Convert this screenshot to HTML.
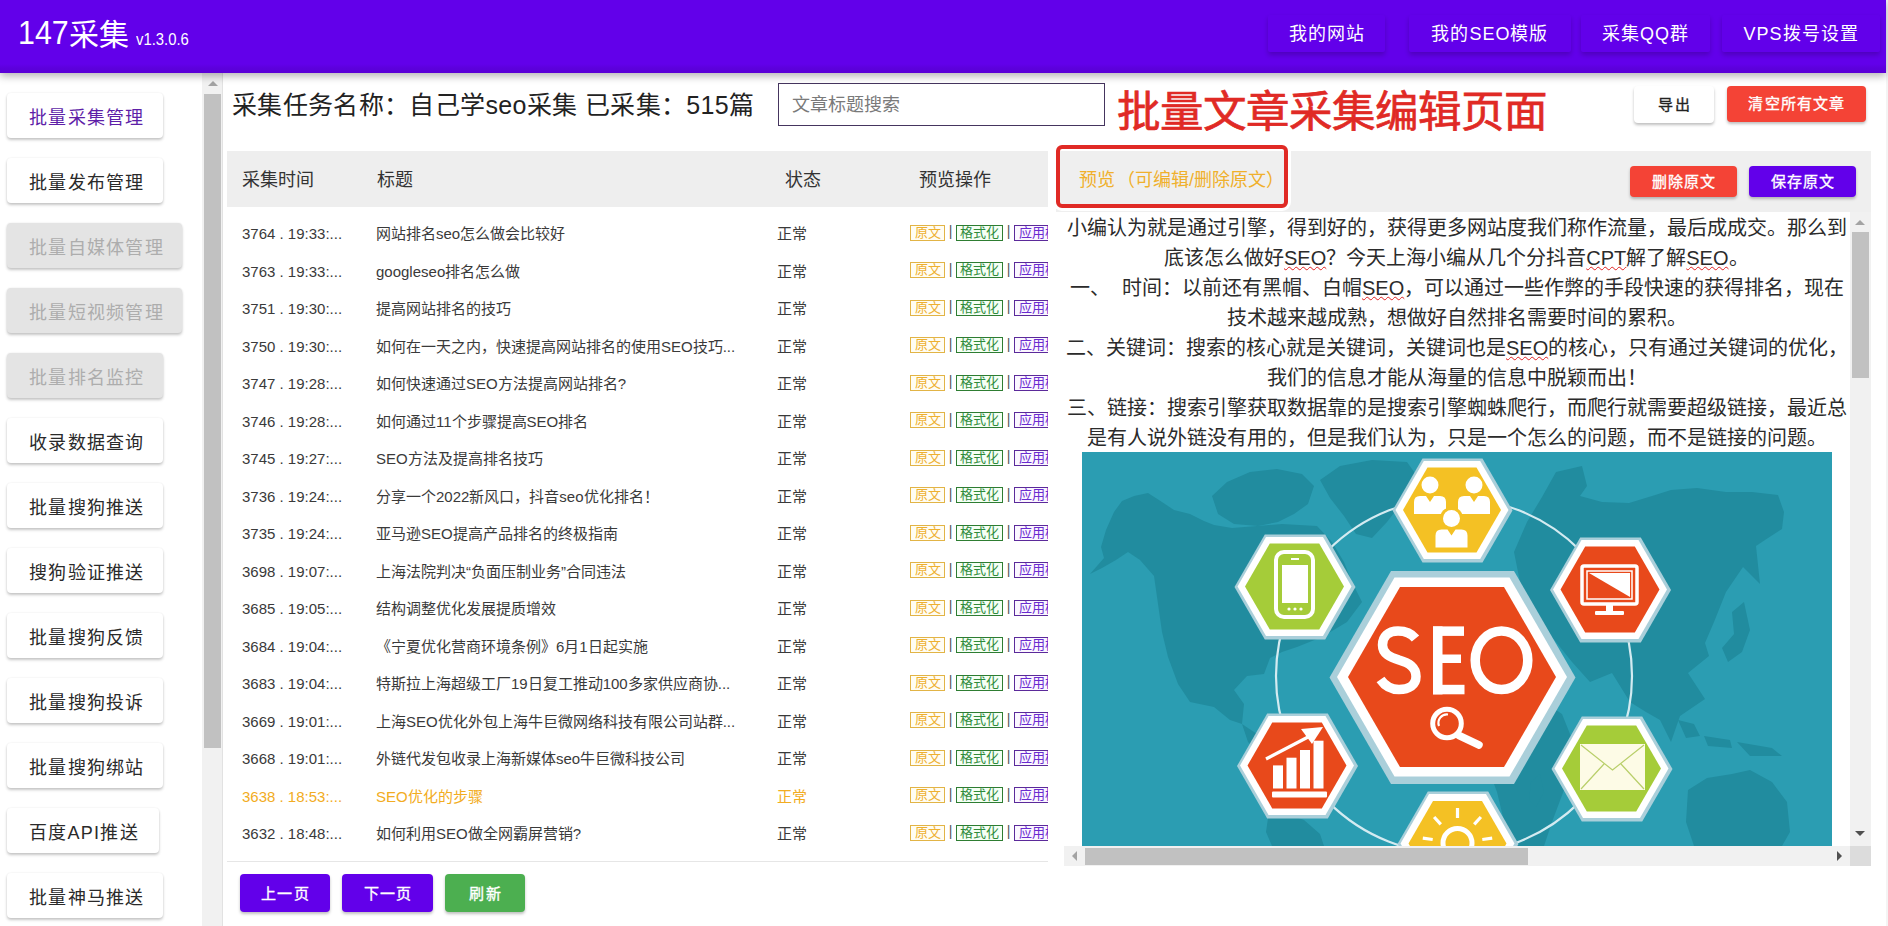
<!DOCTYPE html>
<html lang="zh-CN"><head><meta charset="utf-8">
<style>
*{margin:0;padding:0;box-sizing:border-box}
html,body{width:1888px;height:926px;overflow:hidden;background:#fff;font-family:"Liberation Sans",sans-serif;color:#222}
.abs{position:absolute}
#hdr{position:absolute;left:0;top:0;width:1886px;height:73px;background:linear-gradient(#6200ea 0,#6200ea 64px,#5c00dc 68px,#5a00d6 73px);box-shadow:0 3px 8px rgba(0,0,0,.3);z-index:5}
#hdr .logo{position:absolute;left:18px;top:10px;color:#fff;font-size:30px;white-space:nowrap}
#hdr .n147{display:inline-block;font-size:33px;transform:scaleX(0.92);transform-origin:0 0;margin-right:-4px;position:relative;top:-1px}
#hdr .ver{position:absolute;left:135.5px;top:29.5px;font-size:16.5px;color:#fff;white-space:nowrap;transform:scaleX(0.9);transform-origin:0 0}
.nb{position:absolute;top:15px;height:37px;background:#6200ea;color:#fff;font-size:18px;letter-spacing:1px;text-align:center;line-height:39px;border-radius:2px;box-shadow:0 3px 5px rgba(0,0,0,.2)}
#rstrip{position:absolute;left:1886px;top:0;width:2px;height:926px;background:#f4f4f4}
.sb{position:absolute;left:7px;height:45px;background:#fff;border-radius:4px;box-shadow:0 2px 3px rgba(0,0,0,.22),0 0 2px rgba(0,0,0,.08);font-size:18px;letter-spacing:1.25px;color:#2a2a2a;line-height:50px;padding-left:22px;white-space:nowrap}
.sb.dis{background:#e4e4e4;color:#adadad}
.sb.act{color:#5e1fa8}

#title{position:absolute;left:232px;top:86.5px;font-size:25px;letter-spacing:0.35px;color:#222;white-space:nowrap;line-height:36px}
#search{position:absolute;left:778px;top:83px;width:327px;height:43px;border:1px solid #45355e;font-size:18px;color:#7a7a7a;line-height:43px;padding-left:13px}
#bigred{position:absolute;left:1117px;top:84px;font-size:43.5px;color:#e02a25;white-space:nowrap;line-height:56px;-webkit-text-stroke:0.7px #e02a25}
.btn{position:absolute;color:#fff;text-align:center;border-radius:4px;box-shadow:0 2px 3px rgba(0,0,0,.25);white-space:nowrap;letter-spacing:1.2px;text-indent:1.2px;-webkit-text-stroke:0.35px currentColor}
#thead{position:absolute;left:227px;top:151px;width:821px;height:56px;background:#eeeeee;font-size:18px;color:#333;line-height:58px}
#thead span{position:absolute;top:0}
#tbody{position:absolute;left:227px;top:208px;width:821px;height:653px;overflow:hidden}
.row{position:absolute;left:0;width:821px;height:37.5px;line-height:37.5px;font-size:15px;color:#3a3a3a;white-space:nowrap}
.row span{position:absolute;top:0}
.row .c1{left:15px}
.row .c2{left:149px}
.row .c3{left:550px}
.row .tags{left:683px;font-size:0}
.row.hl{color:#f2ac22}
.tg{display:inline-block;font-style:normal;font-size:13px;height:16px;line-height:14px;border:1px solid;padding:0 3.5px;vertical-align:middle;margin-top:-1px}
.tg.y{color:#eeb030;border-color:#e2b446;background:#fffdf3}
.tg.g{color:#2e8b3a;border-color:#2e7d32;background:#f5fff5;padding:0 3px}
.tg.p{color:#6a2bd0;border-color:#5b2a9a;background:#fbf7ff}
.row b{display:inline-block;font-weight:normal;font-size:14px;color:#555;width:11px;text-align:center;vertical-align:middle;margin-top:-3px}
#tline{position:absolute;left:227px;top:861px;width:821px;height:1px;background:#e6e6e6}

#pv{position:absolute;left:1056px;top:151px;width:815px;height:716px;background:#fff}
#pvh{position:absolute;left:1056px;top:151px;width:815px;height:61px;background:#efefef}
#pvt{position:absolute;left:1079px;top:166px;font-size:18px;color:#f0b02c;white-space:nowrap;line-height:28px}
#redbox{position:absolute;left:1056px;top:145px;width:232px;height:63px;border:4px solid #e02a25;border-radius:6px;box-shadow:0 0 0 3px #fff}
#txt{position:absolute;left:1056px;top:213px;width:794px;height:633px;overflow:hidden;background:#fff}
.ln{position:absolute;white-space:nowrap;font-size:20px;line-height:30px;color:#2b2b2b}
.sp{text-decoration:underline wavy #e02020;text-decoration-thickness:1px;text-underline-offset:1px}
#vsb{position:absolute;left:1850px;top:212px;width:21px;height:634px;background:#f1f1f1}
#hsb{position:absolute;left:1064px;top:846px;width:786px;height:20px;background:#f1f1f1}
</style></head><body>
<div id="hdr">
  <div class="logo"><span class="n147">147</span>采集</div><div class="ver">v1.3.0.6</div>
  <div class="nb" style="left:1268px;width:117px">我的网站</div>
  <div class="nb" style="left:1409px;width:162px">我的SEO模版</div>
  <div class="nb" style="left:1581px;width:129px">采集QQ群</div>
  <div class="nb" style="left:1722px;width:158px">VPS拨号设置</div>
</div>
<div id="rstrip"></div>

<!-- sidebar -->
<div class="sb act" style="top:93px;width:156px">批量采集管理</div>
<div class="sb" style="top:158px;width:156px">批量发布管理</div>
<div class="sb dis" style="top:223px;width:175px">批量自媒体管理</div>
<div class="sb dis" style="top:288px;width:175px">批量短视频管理</div>
<div class="sb dis" style="top:353px;width:156px">批量排名监控</div>
<div class="sb" style="top:418px;width:156px">收录数据查询</div>
<div class="sb" style="top:483px;width:156px">批量搜狗推送</div>
<div class="sb" style="top:548px;width:156px">搜狗验证推送</div>
<div class="sb" style="top:613px;width:156px">批量搜狗反馈</div>
<div class="sb" style="top:678px;width:156px">批量搜狗投诉</div>
<div class="sb" style="top:743px;width:156px">批量搜狗绑站</div>
<div class="sb" style="top:808px;width:152px">百度API推送</div>
<div class="sb" style="top:873px;width:156px">批量神马推送</div>

<!-- sidebar scrollbar -->
<div class="abs" style="left:202px;top:73px;width:21px;height:853px;background:#f1f1f1;border-right:1px solid #e2e2e2"></div>
<div class="abs" style="left:204px;top:94px;width:17px;height:654px;background:#c1c1c1"></div>
<div class="abs" style="left:208px;top:81px;width:0;height:0;border-left:5px solid transparent;border-right:5px solid transparent;border-bottom:5px solid #a3a3a3"></div>


<div id="title">采集任务名称：自己学seo采集 已采集：515篇</div>
<div id="search">文章标题搜索</div>
<div id="bigred">批量文章采集编辑页面</div>
<div class="btn" style="left:1634px;top:86px;width:80px;height:37px;line-height:37px;background:#fff;color:#222;font-size:15px">导出</div>
<div class="btn" style="left:1727px;top:86px;width:139px;height:36px;line-height:36px;background:#f44336;font-size:15px">清空所有文章</div>

<div id="thead"><span style="left:15px">采集时间</span><span style="left:150px">标题</span><span style="left:558px">状态</span><span style="left:692px">预览操作</span></div>
<div id="tbody">
<div class="row" style="top:7.25px"><span class="c1">3764 . 19:33:...</span><span class="c2">网站排名seo怎么做会比较好</span><span class="c3">正常</span><span class="tags"><i class="tg y">原文</i><b>|</b><i class="tg g">格式化</i><b>|</b><i class="tg p">应用模板</i></span></div>
<div class="row" style="top:44.75px"><span class="c1">3763 . 19:33:...</span><span class="c2">googleseo排名怎么做</span><span class="c3">正常</span><span class="tags"><i class="tg y">原文</i><b>|</b><i class="tg g">格式化</i><b>|</b><i class="tg p">应用模板</i></span></div>
<div class="row" style="top:82.25px"><span class="c1">3751 . 19:30:...</span><span class="c2">提高网站排名的技巧</span><span class="c3">正常</span><span class="tags"><i class="tg y">原文</i><b>|</b><i class="tg g">格式化</i><b>|</b><i class="tg p">应用模板</i></span></div>
<div class="row" style="top:119.75px"><span class="c1">3750 . 19:30:...</span><span class="c2">如何在一天之内，快速提高网站排名的使用SEO技巧...</span><span class="c3">正常</span><span class="tags"><i class="tg y">原文</i><b>|</b><i class="tg g">格式化</i><b>|</b><i class="tg p">应用模板</i></span></div>
<div class="row" style="top:157.25px"><span class="c1">3747 . 19:28:...</span><span class="c2">如何快速通过SEO方法提高网站排名?</span><span class="c3">正常</span><span class="tags"><i class="tg y">原文</i><b>|</b><i class="tg g">格式化</i><b>|</b><i class="tg p">应用模板</i></span></div>
<div class="row" style="top:194.75px"><span class="c1">3746 . 19:28:...</span><span class="c2">如何通过11个步骤提高SEO排名</span><span class="c3">正常</span><span class="tags"><i class="tg y">原文</i><b>|</b><i class="tg g">格式化</i><b>|</b><i class="tg p">应用模板</i></span></div>
<div class="row" style="top:232.25px"><span class="c1">3745 . 19:27:...</span><span class="c2">SEO方法及提高排名技巧</span><span class="c3">正常</span><span class="tags"><i class="tg y">原文</i><b>|</b><i class="tg g">格式化</i><b>|</b><i class="tg p">应用模板</i></span></div>
<div class="row" style="top:269.75px"><span class="c1">3736 . 19:24:...</span><span class="c2">分享一个2022新风口，抖音seo优化排名！</span><span class="c3">正常</span><span class="tags"><i class="tg y">原文</i><b>|</b><i class="tg g">格式化</i><b>|</b><i class="tg p">应用模板</i></span></div>
<div class="row" style="top:307.25px"><span class="c1">3735 . 19:24:...</span><span class="c2">亚马逊SEO提高产品排名的终极指南</span><span class="c3">正常</span><span class="tags"><i class="tg y">原文</i><b>|</b><i class="tg g">格式化</i><b>|</b><i class="tg p">应用模板</i></span></div>
<div class="row" style="top:344.75px"><span class="c1">3698 . 19:07:...</span><span class="c2">上海法院判决“负面压制业务”合同违法</span><span class="c3">正常</span><span class="tags"><i class="tg y">原文</i><b>|</b><i class="tg g">格式化</i><b>|</b><i class="tg p">应用模板</i></span></div>
<div class="row" style="top:382.25px"><span class="c1">3685 . 19:05:...</span><span class="c2">结构调整优化发展提质增效</span><span class="c3">正常</span><span class="tags"><i class="tg y">原文</i><b>|</b><i class="tg g">格式化</i><b>|</b><i class="tg p">应用模板</i></span></div>
<div class="row" style="top:419.75px"><span class="c1">3684 . 19:04:...</span><span class="c2">《宁夏优化营商环境条例》6月1日起实施</span><span class="c3">正常</span><span class="tags"><i class="tg y">原文</i><b>|</b><i class="tg g">格式化</i><b>|</b><i class="tg p">应用模板</i></span></div>
<div class="row" style="top:457.25px"><span class="c1">3683 . 19:04:...</span><span class="c2">特斯拉上海超级工厂19日复工推动100多家供应商协...</span><span class="c3">正常</span><span class="tags"><i class="tg y">原文</i><b>|</b><i class="tg g">格式化</i><b>|</b><i class="tg p">应用模板</i></span></div>
<div class="row" style="top:494.75px"><span class="c1">3669 . 19:01:...</span><span class="c2">上海SEO优化外包上海牛巨微网络科技有限公司站群...</span><span class="c3">正常</span><span class="tags"><i class="tg y">原文</i><b>|</b><i class="tg g">格式化</i><b>|</b><i class="tg p">应用模板</i></span></div>
<div class="row" style="top:532.25px"><span class="c1">3668 . 19:01:...</span><span class="c2">外链代发包收录上海新媒体seo牛巨微科技公司</span><span class="c3">正常</span><span class="tags"><i class="tg y">原文</i><b>|</b><i class="tg g">格式化</i><b>|</b><i class="tg p">应用模板</i></span></div>
<div class="row hl" style="top:569.75px"><span class="c1">3638 . 18:53:...</span><span class="c2">SEO优化的步骤</span><span class="c3">正常</span><span class="tags"><i class="tg y">原文</i><b>|</b><i class="tg g">格式化</i><b>|</b><i class="tg p">应用模板</i></span></div>
<div class="row" style="top:607.25px"><span class="c1">3632 . 18:48:...</span><span class="c2">如何利用SEO做全网霸屏营销?</span><span class="c3">正常</span><span class="tags"><i class="tg y">原文</i><b>|</b><i class="tg g">格式化</i><b>|</b><i class="tg p">应用模板</i></span></div>
</div>
<div id="tline"></div>
<div class="btn" style="left:240px;top:874px;width:90px;height:38px;line-height:40px;background:#6200ea;font-size:15px">上一页</div>
<div class="btn" style="left:342px;top:874px;width:91px;height:38px;line-height:40px;background:#6200ea;font-size:15px">下一页</div>
<div class="btn" style="left:445px;top:874px;width:80px;height:38px;line-height:40px;background:#4caf50;font-size:15px">刷新</div>

<div id="pvh"></div>
<div id="pvt">预览<span style="margin-left:2px"></span>（可编辑/删除原文）</div>
<div class="btn" style="left:1630px;top:166px;width:107px;height:31px;line-height:31px;background:#f44336;font-size:15px">删除原文</div>
<div class="btn" style="left:1749px;top:166px;width:107px;height:31px;line-height:31px;background:#6200ea;font-size:15px">保存原文</div>
<div id="txt">
<div class="ln" style="left:11px;top:0px">小编认为就是通过引擎，得到好的，获得更多网站度我们称作流量，最后成成交。那么到</div>
<div class="ln" style="left:108px;top:30px">底该怎么做好<span class="sp">SEO</span>？今天上海小编从几个分抖音<span class="sp">CPT</span>解了解<span class="sp">SEO</span>。</div>
<div class="ln" style="left:14px;top:60px">一、<span style="margin-left:2px"></span>　时间：以前还有黑帽、白帽<span class="sp">SEO</span>，可以通过一些作弊的手段快速的获得排名，现在</div>
<div class="ln" style="left:171px;top:90px">技术越来越成熟，想做好自然排名需要时间的累积。</div>
<div class="ln" style="left:10px;top:120px">二、关键词：搜索的核心就是关键词，关键词也是<span class="sp">SEO</span>的核心，只有通过关键词的优化，</div>
<div class="ln" style="left:211px;top:150px">我们的信息才能从海量的信息中脱颖而出！</div>
<div class="ln" style="left:11px;top:180px">三、链接：搜索引擎获取数据靠的是搜索引擎蜘蛛爬行，而爬行就需要超级链接，最近总</div>
<div class="ln" style="left:31px;top:210px">是有人说外链没有用的，但是我们认为，只是一个怎么的问题，而不是链接的问题。</div>
<div id="img" style="position:absolute;left:26px;top:239px;width:750px;height:394px;background:#2b9bb0"><svg width="750" height="394" viewBox="0 0 750 394" style="display:block"><rect width="750" height="394" fill="#2b9db2"/><path d="M19,95 L24,78 L32,60 L40,49 L52,44 L66,41 L80,50 L92,58 L108,62 L122,69 L132,73 L150,76 L175,74 L200,72 L235,74 L250,90 L262,110 L270,130 L280,150 L265,170 L240,185 L215,195 L200,200 L188,206 L182,222 L165,224 L152,238 L162,252 L160,272 L148,268 L132,255 L108,250 L96,232 L86,205 L80,180 L76,152 L72,124 L58,108 L46,100 L34,108 L20,116 L8,122 L22,106 Z" fill="#218c9f"/><path d="M130,44 L145,30 L168,20 L195,17 L220,22 L232,34 L226,52 L212,62 L196,70 L176,74 L152,72 L136,62 Z" fill="#218c9f"/><path d="M238,28 L258,14 L290,8 L325,10 L335,24 L322,48 L305,70 L290,86 L274,82 L262,64 L248,46 Z" fill="#218c9f"/><path d="M160,272 L178,284 L196,300 L208,314 L198,318 L180,304 L166,290 Z" fill="#218c9f"/><path d="M186,366 L205,362 L222,368 L238,382 L242,394 L190,394 L184,380 Z" fill="#218c9f"/><path d="M474,20 L500,14 L505,34 L498,44 L520,50 L547,51 L570,44 L589,38 L615,36 L644,40 L670,40 L696,43 L702,60 L700,77 L686,86 L674,94 L678,132 L661,115 L644,140 L632,170 L623,191 L627,204 L606,221 L623,247 L598,264 L589,290 L578,268 L564,260 L548,250 L530,221 L508,230 L490,210 L474,190 L455,170 L440,140 L432,100 L445,70 L460,45 Z" fill="#218c9f"/><path d="M650,160 L662,150 L668,178 L660,200 L646,210 L640,196 L652,182 Z" fill="#218c9f"/><path d="M596,268 L612,272 L618,284 L604,286 Z M622,284 L648,288 L650,296 L626,294 Z M655,290 L690,296 L700,304 L668,304 Z" fill="#218c9f"/><path d="M606,338 L625,326 L650,322 L668,318 L690,330 L705,350 L708,380 L700,394 L612,394 L604,370 Z" fill="#218c9f"/><path d="M420,250 L455,245 L480,262 L492,292 L485,330 L470,370 L462,394 L428,394 L415,340 L400,300 L395,270 Z" fill="#218c9f"/><path d="M449,330 L458,322 L462,340 L454,355 L447,348 Z" fill="#218c9f"/><circle cx="372" cy="224" r="178" fill="none" stroke="#d4ebf1" stroke-width="2.2"/><polygon points="493.5,225.5 432.0,332.0 309.0,332.0 247.5,225.5 309.0,119.0 432.0,119.0" fill="#aacfda"/><polygon points="485.0,225.0 427.5,324.6 312.5,324.6 255.0,225.0 312.5,125.4 427.5,125.4" fill="#fff"/><polygon points="474.0,225.0 422.0,315.1 318.0,315.1 266.0,225.0 318.0,134.9 422.0,134.9" fill="#e8491b"/><polygon points="430.5,58.5 400.5,110.5 340.5,110.5 310.5,58.5 340.5,6.5 400.5,6.5" fill="#aacfda"/><polygon points="426.5,58.0 398.2,106.9 341.8,106.9 313.5,58.0 341.8,9.1 398.2,9.1" fill="#fff"/><polygon points="419.0,58.0 394.5,100.4 345.5,100.4 321.0,58.0 345.5,15.6 394.5,15.6" fill="#f4c124"/><polygon points="273.5,135.0 243.2,187.4 182.8,187.4 152.5,135.0 182.8,82.6 243.2,82.6" fill="#aacfda"/><polygon points="269.5,134.5 241.0,183.9 184.0,183.9 155.5,134.5 184.0,85.1 241.0,85.1" fill="#fff"/><polygon points="262.0,134.5 237.2,177.4 187.8,177.4 163.0,134.5 187.8,91.6 237.2,91.6" fill="#a5cc39"/><polygon points="589.0,138.0 558.8,190.4 498.2,190.4 468.0,138.0 498.2,85.6 558.8,85.6" fill="#aacfda"/><polygon points="585.0,137.5 556.5,186.9 499.5,186.9 471.0,137.5 499.5,88.1 556.5,88.1" fill="#fff"/><polygon points="577.5,137.5 552.8,180.4 503.2,180.4 478.5,137.5 503.2,94.6 552.8,94.6" fill="#e8491b"/><polygon points="276.0,314.0 245.8,366.4 185.2,366.4 155.0,314.0 185.2,261.6 245.8,261.6" fill="#aacfda"/><polygon points="272.0,313.5 243.5,362.9 186.5,362.9 158.0,313.5 186.5,264.1 243.5,264.1" fill="#fff"/><polygon points="264.5,313.5 239.8,356.4 190.2,356.4 165.5,313.5 190.2,270.6 239.8,270.6" fill="#e8491b"/><polygon points="590.5,317.0 560.2,369.4 499.8,369.4 469.5,317.0 499.8,264.6 560.2,264.6" fill="#aacfda"/><polygon points="586.5,316.5 558.0,365.9 501.0,365.9 472.5,316.5 501.0,267.1 558.0,267.1" fill="#fff"/><polygon points="579.0,316.5 554.2,359.4 504.8,359.4 480.0,316.5 504.8,273.6 554.2,273.6" fill="#a5cc39"/><polygon points="436.5,392.0 406.2,444.4 345.8,444.4 315.5,392.0 345.8,339.6 406.2,339.6" fill="#aacfda"/><polygon points="432.5,391.5 404.0,440.9 347.0,440.9 318.5,391.5 347.0,342.1 404.0,342.1" fill="#fff"/><polygon points="424.5,391.5 400.0,433.9 351.0,433.9 326.5,391.5 351.0,349.1 400.0,349.1" fill="#f4c124"/><path d="M333.5,186.5 C329,181 322,179 316,179 C306,179 300.5,185 300.5,193 C300.5,202 308,205 317,208 C327,211 334,215 334,224.5 C334,233 327,237.5 317,237.5 C309,237.5 303,234 298.5,227.5" fill="none" stroke="#fff" stroke-width="9.5" stroke-linecap="butt"/><rect x="351" y="174.4" width="9.5" height="68" fill="#fff"/><rect x="351" y="174.4" width="31" height="9.5" fill="#fff"/><rect x="351" y="202.5" width="28" height="8.5" fill="#fff"/><rect x="351" y="232.8" width="31.5" height="9.5" fill="#fff"/><ellipse cx="419.5" cy="208.3" rx="26.3" ry="29.2" fill="none" stroke="#fff" stroke-width="9.5"/><circle cx="365" cy="271.5" r="14.3" fill="none" stroke="#fff" stroke-width="5"/><path d="M357,274 A8.5,8.5 0 0 1 366,262.5" fill="none" stroke="#fff" stroke-width="2.2"/><line x1="377" y1="283.5" x2="397" y2="293" stroke="#fff" stroke-width="7.5" stroke-linecap="round"/><circle cx="348" cy="33" r="8.5" fill="#fff"/><path d="M332,62 L332,50 Q332,44 338,44 L344,44 L348,50 L352,44 L358,44 Q364,44 364,50 L364,62 Z" fill="#fff"/><circle cx="392" cy="33" r="8.5" fill="#fff"/><path d="M376,62 L376,50 Q376,44 382,44 L388,44 L392,50 L396,44 L402,44 Q408,44 408,50 L408,62 Z" fill="#fff"/><circle cx="369.5" cy="66.5" r="11.5" fill="#f4c124"/><circle cx="369.5" cy="66.5" r="8.5" fill="#fff"/><path d="M353.5,95.5 L353.5,83.5 Q353.5,77.5 359.5,77.5 L365.5,77.5 L369.5,83.5 L373.5,77.5 L379.5,77.5 Q385.5,77.5 385.5,83.5 L385.5,95.5 Z" fill="#fff"/><rect x="194" y="100" width="37" height="65" rx="8" fill="none" stroke="#fff" stroke-width="4"/><rect x="200" y="113" width="26" height="38" fill="#fff"/><rect x="209" y="106" width="8" height="2" fill="#fff"/><circle cx="207" cy="157" r="1.6" fill="#fff"/><circle cx="213" cy="157" r="1.6" fill="#fff"/><circle cx="219" cy="157" r="1.6" fill="#fff"/><rect x="500" y="114" width="55" height="38" rx="2" fill="none" stroke="#fff" stroke-width="3.5"/><rect x="505" y="119" width="45" height="28" fill="none" stroke="#fff" stroke-width="1.5"/><polygon points="507,121 548,121 548,145" fill="#fff"/><rect x="524" y="153" width="7" height="6" fill="#fff"/><rect x="513" y="159" width="29" height="4" rx="1" fill="#fff"/><rect x="191" y="313.4" width="10" height="23.100000000000023" fill="#fff"/><rect x="204.5" y="305.7" width="10" height="30.80000000000001" fill="#fff"/><rect x="218" y="298" width="10" height="38.5" fill="#fff"/><rect x="231.5" y="288.7" width="10" height="47.80000000000001" fill="#fff"/><rect x="190" y="339.6" width="55" height="6" rx="1" fill="#fff"/><path d="M184,307 L228,284" stroke="#fff" stroke-width="3.2"/><polygon points="241,275 219,277 230,292" fill="#fff"/><rect x="498" y="292" width="65" height="46" fill="#fdfbe6"/><path d="M499,293 L530.5,318 L562,293 M499,337 L522,312 M562,337 L539,312" fill="none" stroke="#b9cf6a" stroke-width="1.2"/><line x1="375.5" y1="366.0" x2="375.5" y2="356.0" stroke="#fff" stroke-width="3.2"/><line x1="358.8" y1="372.4" x2="352.1" y2="365.0" stroke="#fff" stroke-width="3.2"/><line x1="392.2" y1="372.4" x2="398.9" y2="365.0" stroke="#fff" stroke-width="3.2"/><line x1="350.7" y1="387.5" x2="340.8" y2="386.1" stroke="#fff" stroke-width="3.2"/><line x1="400.3" y1="387.5" x2="410.2" y2="386.1" stroke="#fff" stroke-width="3.2"/><circle cx="375.5" cy="391" r="14.5" fill="none" stroke="#fff" stroke-width="5"/></svg></div>
</div>
<div id="vsb"></div>
<div class="abs" style="left:1852px;top:232px;width:17px;height:146px;background:#c1c1c1"></div>
<div class="abs" style="left:1855px;top:220px;width:0;height:0;border-left:5px solid transparent;border-right:5px solid transparent;border-bottom:5px solid #a3a3a3"></div>
<div class="abs" style="left:1855px;top:831px;width:0;height:0;border-left:5px solid transparent;border-right:5px solid transparent;border-top:5px solid #505050"></div>
<div id="hsb"></div>
<div class="abs" style="left:1085px;top:848px;width:443px;height:17px;background:#c1c1c1"></div>
<div class="abs" style="left:1072px;top:851px;width:0;height:0;border-top:5px solid transparent;border-bottom:5px solid transparent;border-right:5px solid #a3a3a3"></div>
<div class="abs" style="left:1837px;top:851px;width:0;height:0;border-top:5px solid transparent;border-bottom:5px solid transparent;border-left:5px solid #505050"></div>
<div class="abs" style="left:1850px;top:846px;width:21px;height:20px;background:#dcdcdc"></div>
<div id="redbox"></div>
</body></html>
